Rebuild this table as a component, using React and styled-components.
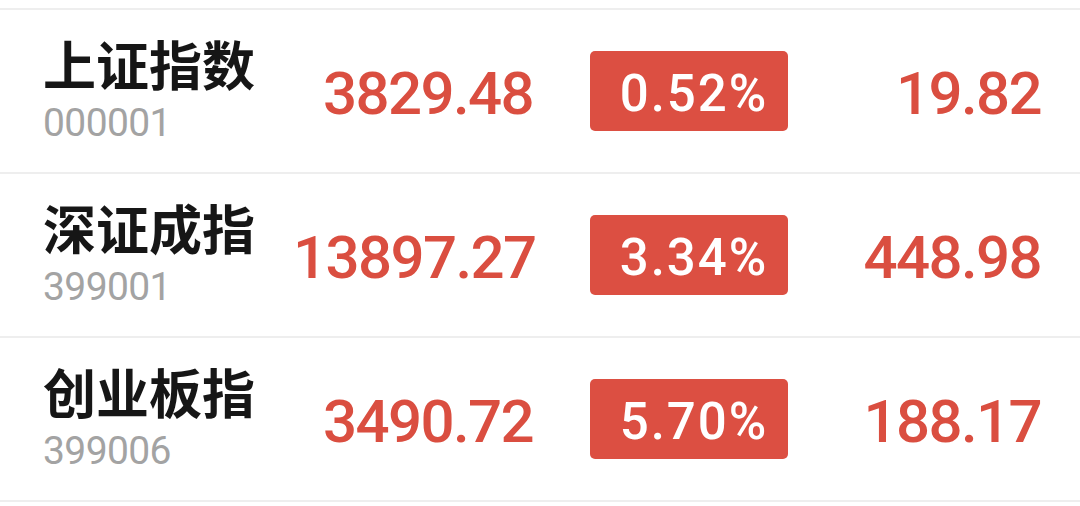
import React from 'react';
import styled, { createGlobalStyle } from 'styled-components';

const GlobalStyle = createGlobalStyle`
  body {
    margin: 0;
    background: #ffffff;
    font-family: Roboto, "Noto Sans CJK SC", sans-serif;
  }
`;

const indices = [
  { name: '上证指数', code: '000001', price: '3829.48', pct: '0.52%', change: '19.82' },
  { name: '深证成指', code: '399001', price: '13897.27', pct: '3.34%', change: '448.98' },
  { name: '创业板指', code: '399006', price: '3490.72', pct: '5.70%', change: '188.17' },
];

const List = styled.div`
  padding-top: 8px;
  width: 1080px;
`;

const Row = styled.div`
  display: grid;
  grid-template-columns: 250px 240px 255px 1fr;
  align-items: center;
  height: 162px;
  padding: 0 39px 0 43px;
  border-top: 2px solid #eeeeee;
  &:last-child {
    border-bottom: 2px solid #eeeeee;
  }
`;

const NameBlock = styled.div`
  display: flex;
  flex-direction: column;
  margin-top: 2px;
`;

const Name = styled.div`
  font-family: "Noto Sans CJK SC", sans-serif;
  font-weight: 700;
  font-size: 53px;
  line-height: 48px;
  color: #161616;
`;

const Code = styled.div`
  font-family: Roboto, sans-serif;
  font-size: 39px;
  line-height: 44px;
  letter-spacing: -0.6px;
  color: #a3a3a3;
  margin-top: 14px;
`;

const Num = styled.div`
  font-family: Roboto, sans-serif;
  font-weight: 500;
  font-size: 60px;
  line-height: 1;
  letter-spacing: -1.6px;
  color: #da4e40;
  text-align: right;
  margin-top: 5px;
`;

const Badge = styled.div`
  justify-self: end;
  width: 198px;
  height: 80px;
  border-radius: 5px;
  background: #dc4f42;
  color: #ffffff;
  display: flex;
  align-items: center;
  justify-content: center;
  padding: 4px 0 0 10px;
  box-sizing: border-box;
  font-family: Roboto, sans-serif;
  font-weight: 500;
  font-size: 51px;
  letter-spacing: 2px;
`;

export default function App() {
  return (
    <>
      <GlobalStyle />
      <List>
        {indices.map((item) => (
          <Row key={item.code}>
            <NameBlock>
              <Name>{item.name}</Name>
              <Code>{item.code}</Code>
            </NameBlock>
            <Num>{item.price}</Num>
            <Badge>{item.pct}</Badge>
            <Num>{item.change}</Num>
          </Row>
        ))}
      </List>
    </>
  );
}
